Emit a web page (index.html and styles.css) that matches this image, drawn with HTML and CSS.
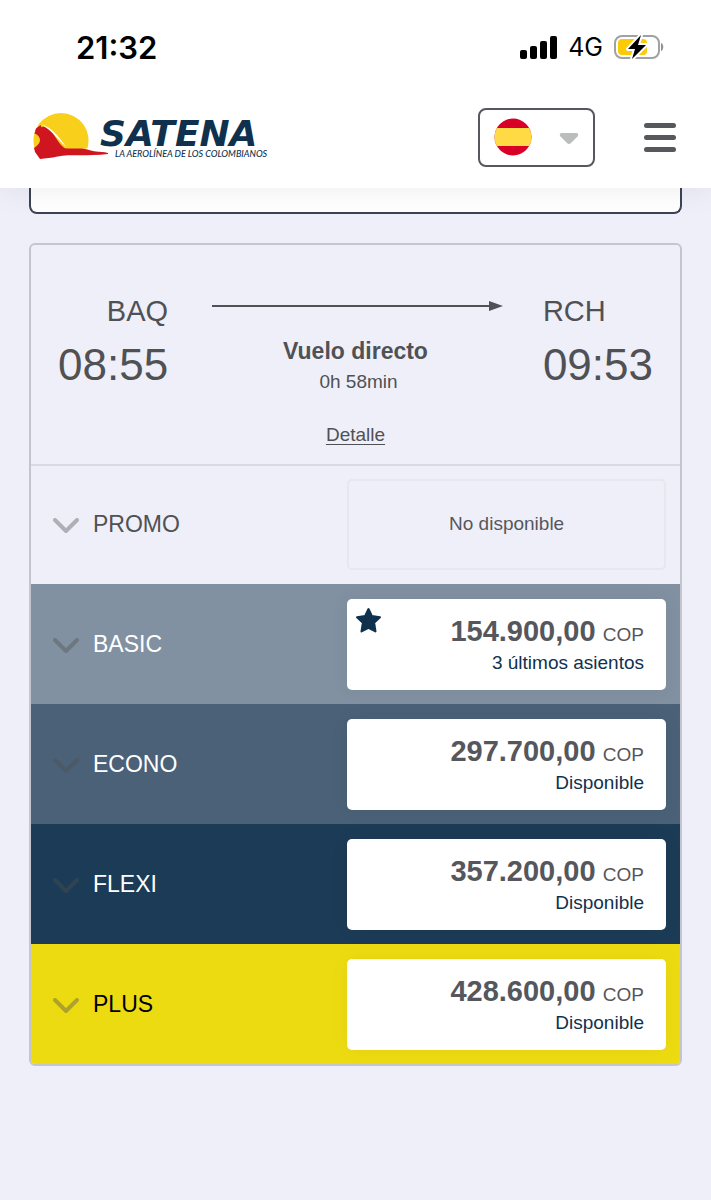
FILE: index.html
```html
<!DOCTYPE html>
<html lang="es">
<head>
    <meta charset="UTF-8">
    <meta name="viewport" content="width=device-width, initial-scale=1.0">
    <title>SATENA - Selección de vuelo</title>
    <link rel="stylesheet" href="styles.css">
</head>
<body>
    <header class="header">
        <div class="status">
            <span class="clock">21:32</span>
            <div class="status-icons">
                <svg width="37" height="23" viewBox="0 0 37 23" aria-hidden="true">
                    <rect x="0" y="14" width="7" height="9" rx="2"/>
                    <rect x="10" y="10" width="7" height="13" rx="2"/>
                    <rect x="20" y="5" width="7" height="18" rx="2"/>
                    <rect x="30" y="0" width="7" height="23" rx="2"/>
                </svg>
                <span class="network">4G</span>
                <svg width="50" height="26" viewBox="0 0 50 26" aria-hidden="true">
                    <rect x="1" y="2" width="44" height="22" rx="7" fill="#fff" stroke="#a0a0a5" stroke-width="2"/>
                    <rect x="4" y="5" width="29" height="16" rx="4" fill="#fbcb05"/>
                    <path d="M47 9c3 1 3 7 0 8z" fill="#909095"/>
                    <path d="M27 1L14 15h7l-3 10 14-14h-8z" fill="#000" stroke="#fff" stroke-width="4" stroke-linejoin="round" paint-order="stroke"/>
                </svg>
            </div>
        </div>
        <nav class="nav">
            <a class="logo" href="#" aria-label="SATENA">
                <svg width="240" height="50" viewBox="0 0 240 50">
                    <path d="M1.700 36.500A27.500 27.500 0 1 1 54.300 36.500L30 38L5 38z" fill="#f8d01c"/>
                    <path d="M3 16.500L7.500 13L8.500 15.200L10.500 14.600C15 16 18 19 21 23C25 29 28 34 32 36.300C38 37 44 36.200 51 36.700C56 37.500 58 39 63 39.500L72 40.200Q76 41 75 42C65 43.500 55 43 47 43.300C38 43 28 43 20 45.500L7 47L2 40L1 36Q7 32 7 28Q6.500 23 1.500 21.500z" fill="#cf1620"/>
                    <path d="M8 12.300C19 16 24 22 33.500 35.500C26 29 20 19 8 12.300z" fill="#fff"/>
                    <text class="logo-name" x="67" y="34">SATENA</text>
                    <text class="logo-tagline" x="82" y="45">LA AEROLÍNEA DE LOS COLOMBIANOS</text>
                </svg>
            </a>
            <div class="nav-actions">
                <div class="language">
                    <svg width="38" height="38" viewBox="0 0 38 38" aria-hidden="true">
                        <clipPath id="round"><circle cx="19" cy="19" r="18.500"/></clipPath>
                        <g clip-path="url(#round)">
                            <rect width="38" height="38" fill="#d80027"/>
                            <rect y="10" width="38" height="18" fill="#ffda44"/>
                        </g>
                    </svg>
                    <svg width="20" height="16" viewBox="0 0 20 16" aria-hidden="true">
                        <path d="M2 4h16q2 1 1 3l-7 7q-2 2-4 0L1 7Q0 5 2 4z" fill="#bbbcbc"/>
                    </svg>
                    <select class="language-select" aria-label="Idioma">
                        <option>ES</option>
                        <option>EN</option>
                    </select>
                </div>
                <button class="menu" type="button" aria-label="Menú">
                    <span></span>
                    <span></span>
                    <span></span>
                </button>
            </div>
        </nav>
    </header>

    <main class="main">
        <div class="panel"></div>

        <section class="flight">
            <div class="trip">
                <div class="stop stop-from">
                    <span class="airport">BAQ</span>
                    <span class="time">08:55</span>
                </div>
                <div class="route">
                    <div class="arrow"></div>
                    <strong class="route-type">Vuelo directo</strong>
                    <span class="duration">0h 58min</span>
                    <a class="detail" href="#">Detalle</a>
                </div>
                <div class="stop">
                    <span class="airport">RCH</span>
                    <span class="time">09:53</span>
                </div>
            </div>

            <div class="fare promo">
                <button class="fare-name" type="button">
                    <svg class="chevron" viewBox="0 0 26 16"><path d="M2 2l11 11L24 2"/></svg>
                    PROMO
                </button>
                <div class="price unavailable">No disponible</div>
            </div>
            <div class="fare basic">
                <button class="fare-name" type="button">
                    <svg class="chevron" viewBox="0 0 26 16"><path d="M2 2l11 11L24 2"/></svg>
                    BASIC
                </button>
                <button class="price" type="button">
                    <svg class="star" viewBox="0 0 26 26"><path d="M13 2l3.300 6.800 7.700 1.100-5.600 5.300 1.300 8.300L13 20l-6.700 3.500 1.300-8.300L2 9.900l7.700-1.100z"/></svg>
                    <span class="amount"><b>154.900,00</b> COP</span>
                    <span class="seats">3 últimos asientos</span>
                </button>
            </div>
            <div class="fare econo">
                <button class="fare-name" type="button">
                    <svg class="chevron" viewBox="0 0 26 16"><path d="M2 2l11 11L24 2"/></svg>
                    ECONO
                </button>
                <button class="price" type="button">
                    <span class="amount"><b>297.700,00</b> COP</span>
                    <span class="seats">Disponible</span>
                </button>
            </div>
            <div class="fare flexi">
                <button class="fare-name" type="button">
                    <svg class="chevron" viewBox="0 0 26 16"><path d="M2 2l11 11L24 2"/></svg>
                    FLEXI
                </button>
                <button class="price" type="button">
                    <span class="amount"><b>357.200,00</b> COP</span>
                    <span class="seats">Disponible</span>
                </button>
            </div>
            <div class="fare plus">
                <button class="fare-name" type="button">
                    <svg class="chevron" viewBox="0 0 26 16"><path d="M2 2l11 11L24 2"/></svg>
                    PLUS
                </button>
                <button class="price" type="button">
                    <span class="amount"><b>428.600,00</b> COP</span>
                    <span class="seats">Disponible</span>
                </button>
            </div>
        </section>
    </main>
</body>
</html>
```

FILE: styles.css
```css
* {
    box-sizing: border-box;
}
body {
    margin: 0;
    background-color: #efeff9;
    color: #505154;
    font-family: "Liberation Sans", Arial, sans-serif;
}
button {
    border: 0;
    padding: 0;
    background: none;
    color: inherit;
    font-family: inherit;
    cursor: pointer;
}

/* header */
.header {
    position: sticky;
    top: 0;
    z-index: 1;
    padding-bottom: 8px;
    background-color: #fff;
    box-shadow: 0 0 30px rgba(0, 0, 0, 0.08);
}
.status {
    display: flex;
    justify-content: space-between;
    align-items: center;
    height: 94px;
    padding: 0 47px 0 76px;
    color: #000;
    font-family: Inter, sans-serif;
}
.clock {
    font-size: 31px;
    font-weight: 600;
}
.status-icons {
    display: flex;
    align-items: center;
    gap: 11px;
}
.network {
    font-size: 25px;
}
.nav {
    display: flex;
    justify-content: space-between;
    align-items: center;
    height: 86px;
    padding: 0 35px 0 33px;
}
.logo svg {
    display: block;
}
.logo-name {
    fill: #10314d;
    font: italic bold 36px "DejaVu Sans", sans-serif;
}
.logo-tagline {
    fill: #10314d;
    font: italic 500 9px Lato, sans-serif;
}
.nav-actions {
    display: flex;
    align-items: center;
    gap: 49px;
}
.language {
    position: relative;
    display: flex;
    justify-content: space-between;
    align-items: center;
    width: 117px;
    height: 59px;
    padding: 0 14px;
    border: 2px solid #55585c;
    border-radius: 8px;
}
.language-select {
    position: absolute;
    inset: 0;
    width: 100%;
    border: 0;
    background: none;
    color: transparent;
    appearance: none;
}
.menu {
    display: flex;
    flex-direction: column;
    gap: 7px;
    width: 32px;
}
.menu span {
    height: 5px;
    border-radius: 3px;
    background-color: #55585c;
}

/* content */
.main {
    padding: 0 29px 40px;
}
.panel {
    height: 26px;
    margin-bottom: 29px;
    border: 2px solid #3c4454;
    border-top: 0;
    border-radius: 0 0 8px 8px;
    background-color: #fff;
}
.flight {
    border: 2px solid #c5c5cf;
    border-radius: 6px;
    overflow: hidden;
}
.trip {
    display: flex;
    justify-content: space-between;
    padding: 48px 27px 18px;
}
.stop {
    display: flex;
    flex-direction: column;
}
.stop-from {
    align-items: flex-end;
}
.airport {
    font-size: 29px;
    line-height: 36px;
}
.time {
    margin-top: 10px;
    font-size: 44px;
    line-height: 52px;
}
.route {
    flex: 1;
    display: flex;
    flex-direction: column;
    align-items: center;
}
.arrow {
    display: flex;
    align-items: center;
    align-self: stretch;
    height: 10px;
    margin: 8px 40px 26px 44px;
}
.arrow::before {
    content: "";
    flex: 1;
    height: 2px;
    background-color: #505154;
}
.arrow::after {
    content: "";
    border: 5px solid transparent;
    border-right-width: 0;
    border-left: 14px solid #505154;
}
.route-type {
    font-size: 23px;
    line-height: 28px;
}
.duration {
    margin-top: 6px;
    padding-left: 6px;
    font-size: 19px;
    line-height: 22px;
}
.detail {
    margin-top: 31px;
    color: inherit;
    font-size: 19px;
    line-height: 22px;
    text-underline-offset: 3px;
}

/* fares */
.fare {
    display: flex;
    justify-content: space-between;
    align-items: center;
    min-height: 120px;
    padding: 0 14px 0 22px;
    color: #fff;
}
.fare-name {
    display: flex;
    align-items: center;
    gap: 14px;
    font-size: 23px;
}
.chevron {
    width: 26px;
    height: 16px;
    margin-top: 4px;
    fill: none;
    stroke: rgba(80, 80, 80, 0.4);
    stroke-width: 4;
    stroke-linecap: round;
    stroke-linejoin: round;
}
.promo {
    padding-bottom: 2px;
    border-top: 2px solid #d9d9e2;
    color: #505154;
}
.basic {
    background-color: #8191a1;
}
.econo {
    background-color: #4a6178;
}
.flexi {
    background-color: #1c3b56;
}
.plus {
    background-color: #eddb12;
    color: #000;
}
.price {
    position: relative;
    display: flex;
    flex-direction: column;
    justify-content: center;
    align-items: flex-end;
    width: 52%;
    height: 91px;
    padding: 0 22px;
    border-radius: 5px;
    background-color: #fff;
    color: #55575c;
    box-shadow: 0 0 20px rgba(0, 0, 0, 0.05);
}
.unavailable {
    align-items: center;
    border: 2px solid #e7e7ee;
    background: none;
    box-shadow: none;
    font-size: 19px;
}
.amount {
    font-size: 19px;
    line-height: 34px;
}
.amount b {
    margin-right: 2px;
    font-size: 29px;
}
.seats {
    color: #10314d;
    font-size: 19px;
    line-height: 22px;
}
.star {
    position: absolute;
    top: 8px;
    left: 8px;
    width: 27px;
    height: 27px;
    fill: #10314d;
    stroke: #10314d;
    stroke-width: 2;
    stroke-linejoin: round;
}
```
